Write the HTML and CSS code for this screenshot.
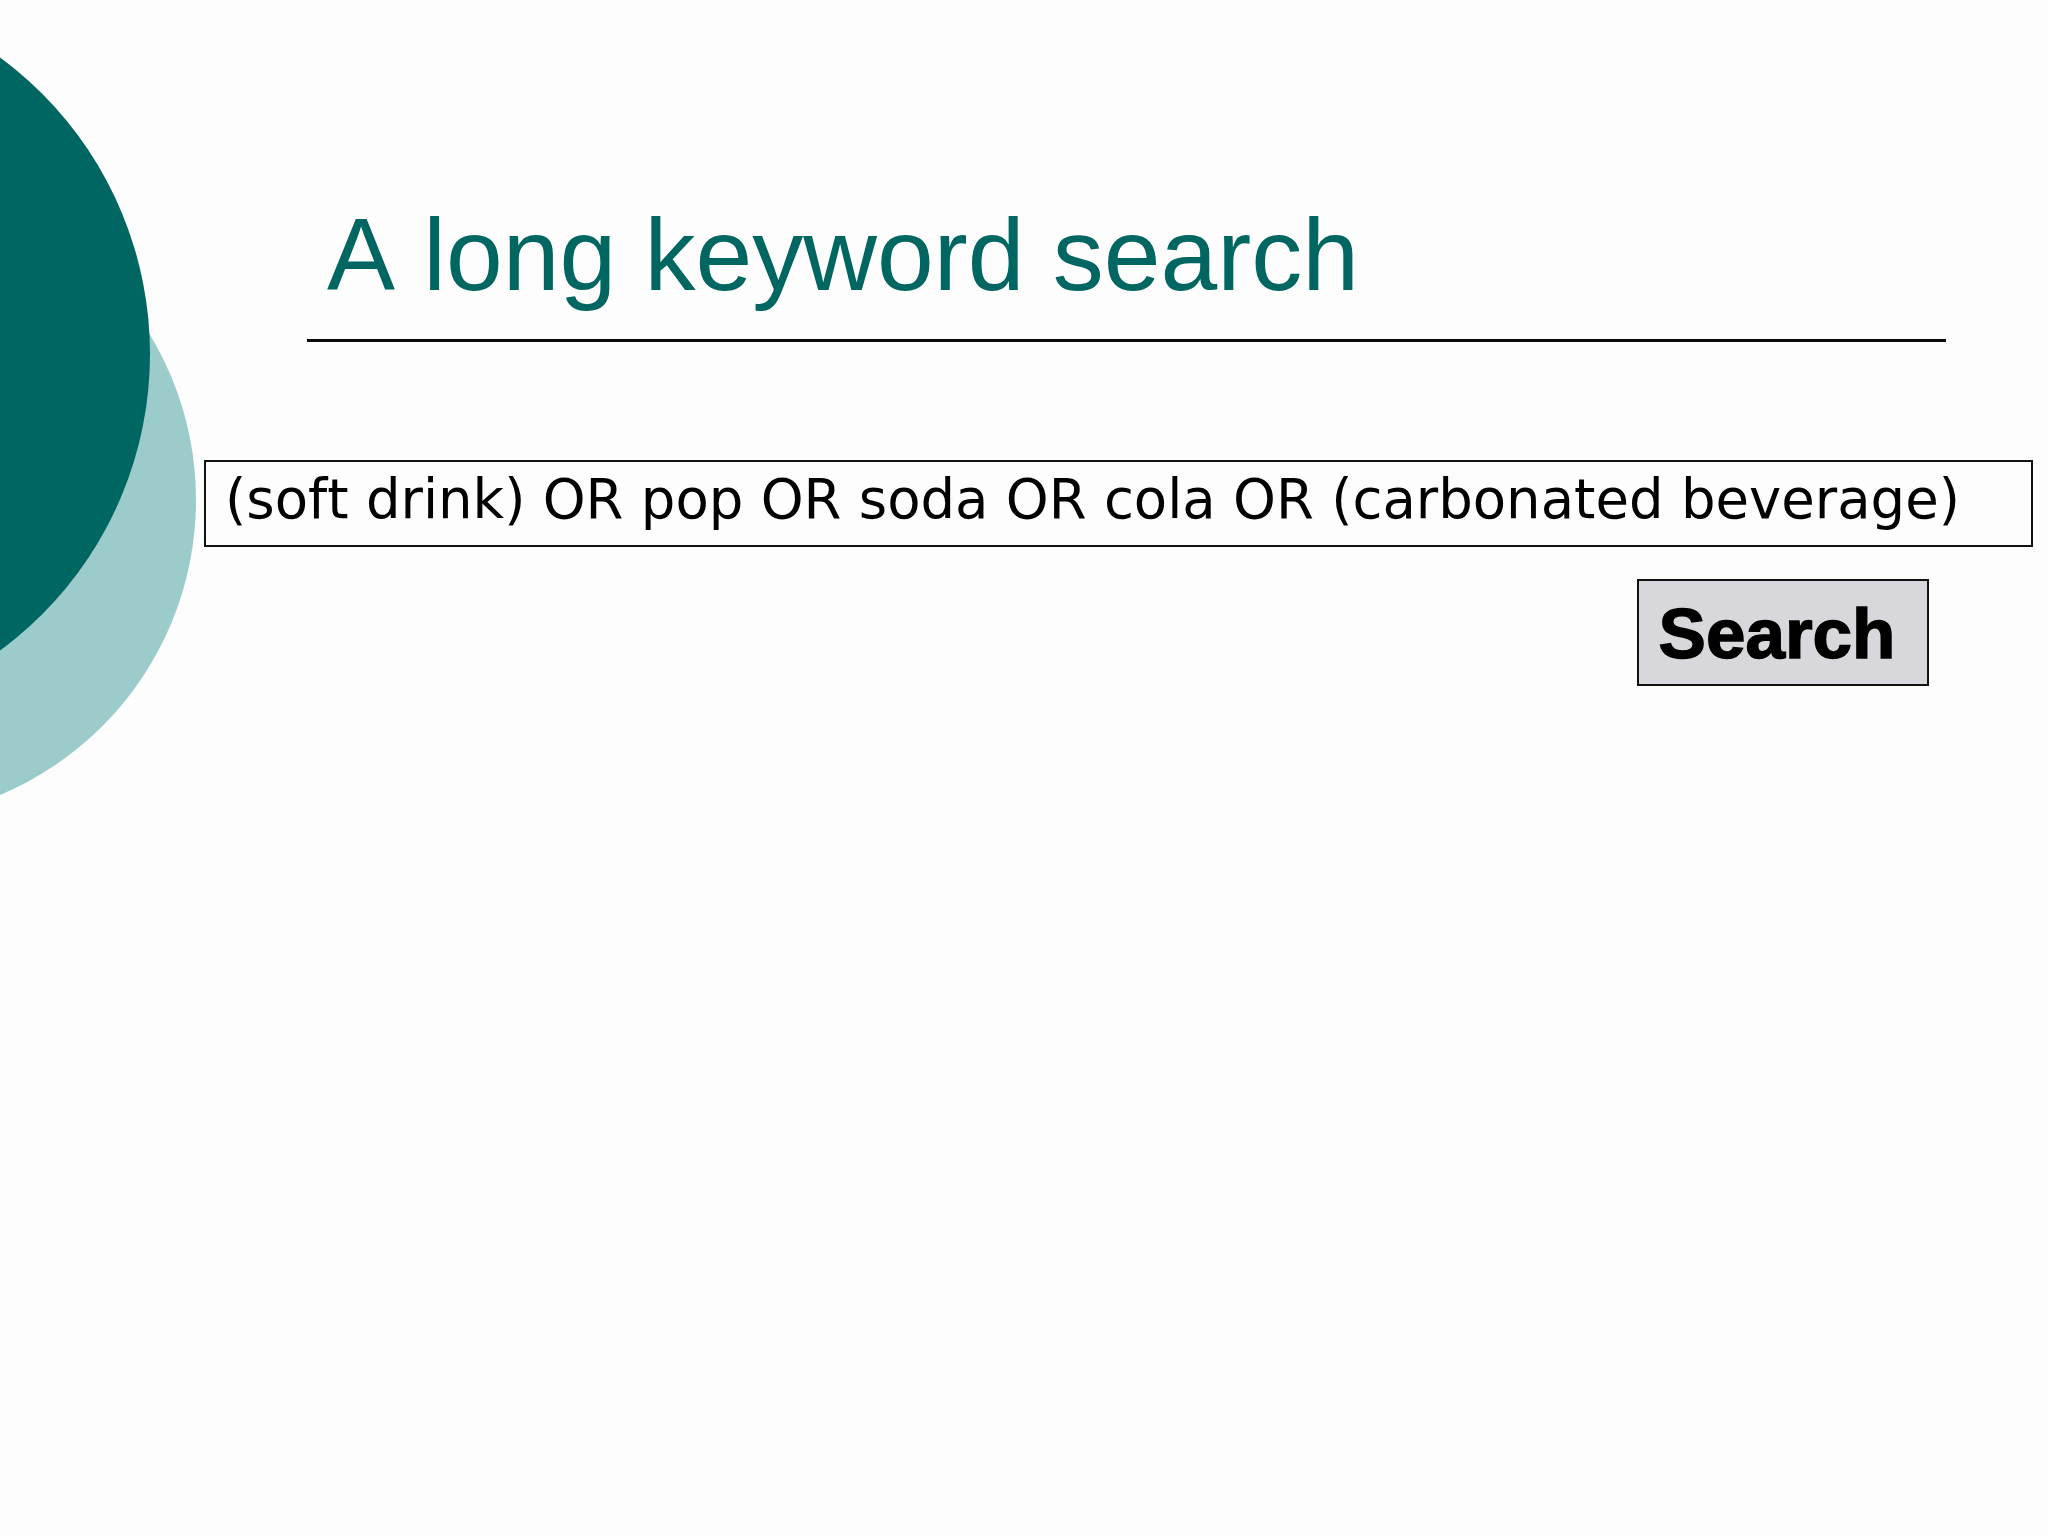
FILE: index.html
```html
<!DOCTYPE html>
<html lang="en">
<head>
<meta charset="utf-8">
<title>A long keyword search</title>
<link rel="stylesheet" href="styles.css">
</head>
<body>
<div class="slide">
  <svg class="decor" width="420" height="840" viewBox="0 0 420 840" aria-hidden="true">
    <circle class="light" cx="-124" cy="500" r="320"/>
    <circle class="dark" cx="-218" cy="354" r="368"/>
  </svg>
  <div class="content">
    <h1 class="title">A long keyword search</h1>
    <div class="rule"></div>
    <div class="query">(soft drink) OR pop OR soda OR cola OR (carbonated beverage)</div>
    <div class="actions">
      <div class="search-btn">Search</div>
    </div>
  </div>
</div>
</body>
</html>
```

FILE: styles.css
```css
html, body {
  margin: 0;
  padding: 0;
  background: #fdfdfd;
}

.slide {
  position: relative;
  width: 2048px;
  height: 1536px;
  overflow: hidden;
  background: #fdfdfd;
  font-kerning: none;
}

.decor {
  position: absolute;
  left: 0;
  top: 0;
}

.decor .light {
  fill: #9ccbcc;
}

.decor .dark {
  fill: #006661;
}

.content {
  position: relative;
  display: flex;
  flex-direction: column;
  align-items: flex-start;
  padding-top: 204px;
}

.title {
  margin: 0 0 0 327px;
  font-family: "Liberation Sans", Arial, sans-serif;
  font-weight: normal;
  font-size: 102px;
  line-height: 102px;
  color: #006661;
  white-space: nowrap;
  font-kerning: none;
}

.rule {
  margin: 33px 0 0 307px;
  width: 1639px;
  height: 3px;
  background: #0a0a0a;
}

.query {
  box-sizing: border-box;
  margin: 118px 0 0 204px;
  width: 1829px;
  height: 87px;
  border: 2px solid #111;
  background: #fdfdfd;
  padding: 10px 0 0 19px;
  font-family: "DejaVu Sans", Verdana, sans-serif;
  font-size: 54.5px;
  line-height: 54px;
  color: #000;
  white-space: nowrap;
  font-kerning: none;
}

.actions {
  display: flex;
  margin: 32px 0 0 1637px;
}

.search-btn {
  box-sizing: border-box;
  width: 292px;
  height: 107px;
  border: 2px solid #111;
  background: #d8d7db;
  display: flex;
  justify-content: center;
  padding: 17px 12px 0 0;
  font-family: "Liberation Sans", Arial, sans-serif;
  font-weight: bold;
  font-size: 71px;
  line-height: 71px;
  color: #000;
  -webkit-text-stroke: 1.5px #000;
  font-kerning: none;
}
```
